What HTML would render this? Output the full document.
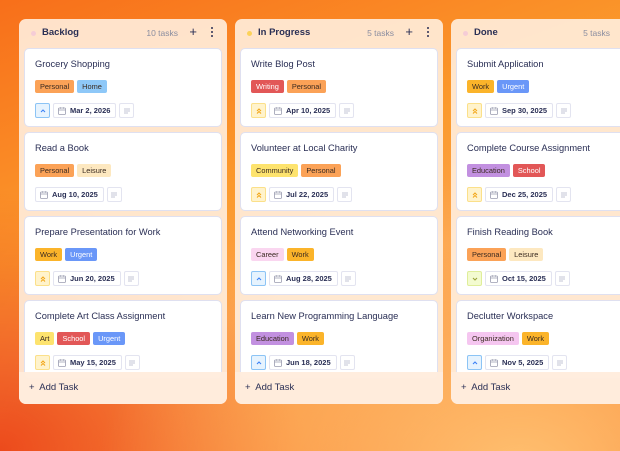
<!DOCTYPE html>
<html><head><meta charset="utf-8"><style>
*{box-sizing:border-box;margin:0;padding:0}
body{width:620px;height:451px;overflow:hidden;font-family:"Liberation Sans",sans-serif;color:#2a2f55;
background:radial-gradient(ellipse 420px 300px at 520px 470px,#ffc070 0%,rgba(255,180,90,0) 100%),
radial-gradient(ellipse 300px 260px at 0px 451px,#ec4a1c 0%,rgba(236,74,28,0) 100%),
linear-gradient(160deg,#f86f1a 0%,#fb9a2c 40%,#fca24a 60%,#f87a2a 100%);position:relative}
.col{position:absolute;top:19px;width:208px;height:385px;border-radius:7px;background:rgba(255,238,222,0.9);overflow:hidden}
.hd{position:absolute;top:0;left:0;right:0;height:29px;font-size:9px}
.dot{position:absolute;left:12px;top:12px;width:5px;height:5px;border-radius:50%}
.ttl{position:absolute;left:23px;top:8px;font-weight:bold;font-size:9.5px}
.cnt{position:absolute;right:49px;top:9px;color:#8a8da0;font-size:8.5px}
.plus{position:absolute;right:30px;top:6px;font-size:13px;line-height:13px}
.more{position:absolute;right:13px;top:8px;width:3px}
.more i{display:block;width:2.4px;height:2.4px;background:#2a2f55;border-radius:50%;margin-bottom:1.4px}
.card{position:absolute;left:5px;width:198px;height:79px;background:#fff;border:1px solid #dfe0f0;border-radius:5px}
.ct{position:absolute;left:10px;top:10px;font-size:9.3px;color:#2a2f55}
.tags{position:absolute;left:10px;top:31px;display:flex;gap:3px}
.tag{height:13px;line-height:13px;padding:0 5px;font-size:7.4px;border-radius:2px;color:#3a2a20}
.ft{position:absolute;left:10px;top:54px;display:flex;gap:3px}
.pr{width:15px;height:15px;border-radius:2px;border:1px solid;display:flex;align-items:center;justify-content:center}
.dt{height:15px;border:1px solid #e3e4f0;border-radius:2px;font-size:7.5px;line-height:13px;padding:0 5px 0 4px;display:flex;align-items:center;gap:4px;font-weight:600;color:#2a2f55}
.nt{width:15px;height:15px;border:1px solid #e3e4f0;border-radius:2px;display:flex;align-items:center;justify-content:center}
.add{position:absolute;left:0;right:0;top:353px;height:32px;background:rgba(255,236,220,0.95);font-size:9.5px;padding:10px 0 0 10px}
</style></head><body>
<svg width="0" height="0" style="position:absolute"><defs>
<symbol id="cal" viewBox="0 0 8 8"><rect x="0.5" y="1" width="7" height="6.5" rx="1" fill="none" stroke="#9a9cb0" stroke-width="0.8"/><path d="M0.5 3h7M2.5 0.3v1.4M5.5 0.3v1.4" stroke="#9a9cb0" stroke-width="0.8"/></symbol>
<symbol id="ln" viewBox="0 0 8 8"><path d="M1 2h6M1 4h6M1 6h4" stroke="#b0b3c8" stroke-width="0.8"/></symbol>
<symbol id="up" viewBox="0 0 8 8"><path d="M2 5l2-2 2 2" fill="none" stroke="#3b82f6" stroke-width="1.1"/></symbol>
<symbol id="up2" viewBox="0 0 8 8"><path d="M2 4l2-2 2 2M2 6.5l2-2 2 2" fill="none" stroke="#f2a516" stroke-width="1"/></symbol>
<symbol id="dn" viewBox="0 0 8 8"><path d="M2 3l2 2 2-2" fill="none" stroke="#9aa33a" stroke-width="1.1"/></symbol>
</defs></svg>
<div class="col" style="left:19px">
 <div class="hd"><span class="dot" style="background:#f5ccd6"></span><span class="ttl">Backlog</span><span class="cnt">10 tasks</span><span class="plus">+</span><span class="more"><i></i><i></i><i></i></span></div>
 <div class="card" style="top:29px"><div class="ct">Grocery Shopping</div><div class="tags"><span class="tag" style="background:#fba257">Personal</span><span class="tag" style="background:#8ec8f8">Home</span></div><div class="ft"><span class="pr" style="background:#e6f3fe;border-color:#8cc4f5"><svg width="8" height="8"><use href="#up"/></svg></span><span class="dt"><svg width="8" height="8"><use href="#cal"/></svg>Mar 2, 2026</span><span class="nt"><svg width="8" height="8"><use href="#ln"/></svg></span></div></div>
 <div class="card" style="top:113px"><div class="ct">Read a Book</div><div class="tags"><span class="tag" style="background:#fba257">Personal</span><span class="tag" style="background:#fde8c0">Leisure</span></div><div class="ft"><span class="dt"><svg width="8" height="8"><use href="#cal"/></svg>Aug 10, 2025</span><span class="nt"><svg width="8" height="8"><use href="#ln"/></svg></span></div></div>
 <div class="card" style="top:197px"><div class="ct">Prepare Presentation for Work</div><div class="tags"><span class="tag" style="background:#fbb42a">Work</span><span class="tag" style="background:#6a97f8;color:#fff">Urgent</span></div><div class="ft"><span class="pr" style="background:#fff3cc;border-color:#fbe08a"><svg width="8" height="8"><use href="#up2"/></svg></span><span class="dt"><svg width="8" height="8"><use href="#cal"/></svg>Jun 20, 2025</span><span class="nt"><svg width="8" height="8"><use href="#ln"/></svg></span></div></div>
 <div class="card" style="top:281px"><div class="ct">Complete Art Class Assignment</div><div class="tags"><span class="tag" style="background:#fde36e">Art</span><span class="tag" style="background:#e25757;color:#fff">School</span><span class="tag" style="background:#6a97f8;color:#fff">Urgent</span></div><div class="ft"><span class="pr" style="background:#fff3cc;border-color:#fbe08a"><svg width="8" height="8"><use href="#up2"/></svg></span><span class="dt"><svg width="8" height="8"><use href="#cal"/></svg>May 15, 2025</span><span class="nt"><svg width="8" height="8"><use href="#ln"/></svg></span></div></div>
 <div class="add">+&nbsp; Add Task</div>
</div>
<div class="col" style="left:235px">
 <div class="hd"><span class="dot" style="background:#fcd25a"></span><span class="ttl">In Progress</span><span class="cnt">5 tasks</span><span class="plus">+</span><span class="more"><i></i><i></i><i></i></span></div>
 <div class="card" style="top:29px"><div class="ct">Write Blog Post</div><div class="tags"><span class="tag" style="background:#e25757;color:#fff">Writing</span><span class="tag" style="background:#fba257">Personal</span></div><div class="ft"><span class="pr" style="background:#fff3cc;border-color:#fbe08a"><svg width="8" height="8"><use href="#up2"/></svg></span><span class="dt"><svg width="8" height="8"><use href="#cal"/></svg>Apr 10, 2025</span><span class="nt"><svg width="8" height="8"><use href="#ln"/></svg></span></div></div>
 <div class="card" style="top:113px"><div class="ct">Volunteer at Local Charity</div><div class="tags"><span class="tag" style="background:#fde36e">Community</span><span class="tag" style="background:#fba257">Personal</span></div><div class="ft"><span class="pr" style="background:#fff3cc;border-color:#fbe08a"><svg width="8" height="8"><use href="#up2"/></svg></span><span class="dt"><svg width="8" height="8"><use href="#cal"/></svg>Jul 22, 2025</span><span class="nt"><svg width="8" height="8"><use href="#ln"/></svg></span></div></div>
 <div class="card" style="top:197px"><div class="ct">Attend Networking Event</div><div class="tags"><span class="tag" style="background:#fad6f0">Career</span><span class="tag" style="background:#fbb42a">Work</span></div><div class="ft"><span class="pr" style="background:#e6f3fe;border-color:#8cc4f5"><svg width="8" height="8"><use href="#up"/></svg></span><span class="dt"><svg width="8" height="8"><use href="#cal"/></svg>Aug 28, 2025</span><span class="nt"><svg width="8" height="8"><use href="#ln"/></svg></span></div></div>
 <div class="card" style="top:281px"><div class="ct">Learn New Programming Language</div><div class="tags"><span class="tag" style="background:#c290e0">Education</span><span class="tag" style="background:#fbb42a">Work</span></div><div class="ft"><span class="pr" style="background:#e6f3fe;border-color:#8cc4f5"><svg width="8" height="8"><use href="#up"/></svg></span><span class="dt"><svg width="8" height="8"><use href="#cal"/></svg>Jun 18, 2025</span><span class="nt"><svg width="8" height="8"><use href="#ln"/></svg></span></div></div>
 <div class="add">+&nbsp; Add Task</div>
</div>
<div class="col" style="left:451px">
 <div class="hd"><span class="dot" style="background:#f5ccd6"></span><span class="ttl">Done</span><span class="cnt">5 tasks</span><span class="plus">+</span><span class="more"><i></i><i></i><i></i></span></div>
 <div class="card" style="top:29px"><div class="ct">Submit Application</div><div class="tags"><span class="tag" style="background:#fbb42a">Work</span><span class="tag" style="background:#6a97f8;color:#fff">Urgent</span></div><div class="ft"><span class="pr" style="background:#fff3cc;border-color:#fbe08a"><svg width="8" height="8"><use href="#up2"/></svg></span><span class="dt"><svg width="8" height="8"><use href="#cal"/></svg>Sep 30, 2025</span><span class="nt"><svg width="8" height="8"><use href="#ln"/></svg></span></div></div>
 <div class="card" style="top:113px"><div class="ct">Complete Course Assignment</div><div class="tags"><span class="tag" style="background:#c290e0">Education</span><span class="tag" style="background:#e25757;color:#fff">School</span></div><div class="ft"><span class="pr" style="background:#fff3cc;border-color:#fbe08a"><svg width="8" height="8"><use href="#up2"/></svg></span><span class="dt"><svg width="8" height="8"><use href="#cal"/></svg>Dec 25, 2025</span><span class="nt"><svg width="8" height="8"><use href="#ln"/></svg></span></div></div>
 <div class="card" style="top:197px"><div class="ct">Finish Reading Book</div><div class="tags"><span class="tag" style="background:#fba257">Personal</span><span class="tag" style="background:#fde8c0">Leisure</span></div><div class="ft"><span class="pr" style="background:#f3fbd0;border-color:#dfee9a"><svg width="8" height="8"><use href="#dn"/></svg></span><span class="dt"><svg width="8" height="8"><use href="#cal"/></svg>Oct 15, 2025</span><span class="nt"><svg width="8" height="8"><use href="#ln"/></svg></span></div></div>
 <div class="card" style="top:281px"><div class="ct">Declutter Workspace</div><div class="tags"><span class="tag" style="background:#f5c6f0">Organization</span><span class="tag" style="background:#fbb42a">Work</span></div><div class="ft"><span class="pr" style="background:#e6f3fe;border-color:#8cc4f5"><svg width="8" height="8"><use href="#up"/></svg></span><span class="dt"><svg width="8" height="8"><use href="#cal"/></svg>Nov 5, 2025</span><span class="nt"><svg width="8" height="8"><use href="#ln"/></svg></span></div></div>
 <div class="add">+&nbsp; Add Task</div>
</div>
</body></html>
